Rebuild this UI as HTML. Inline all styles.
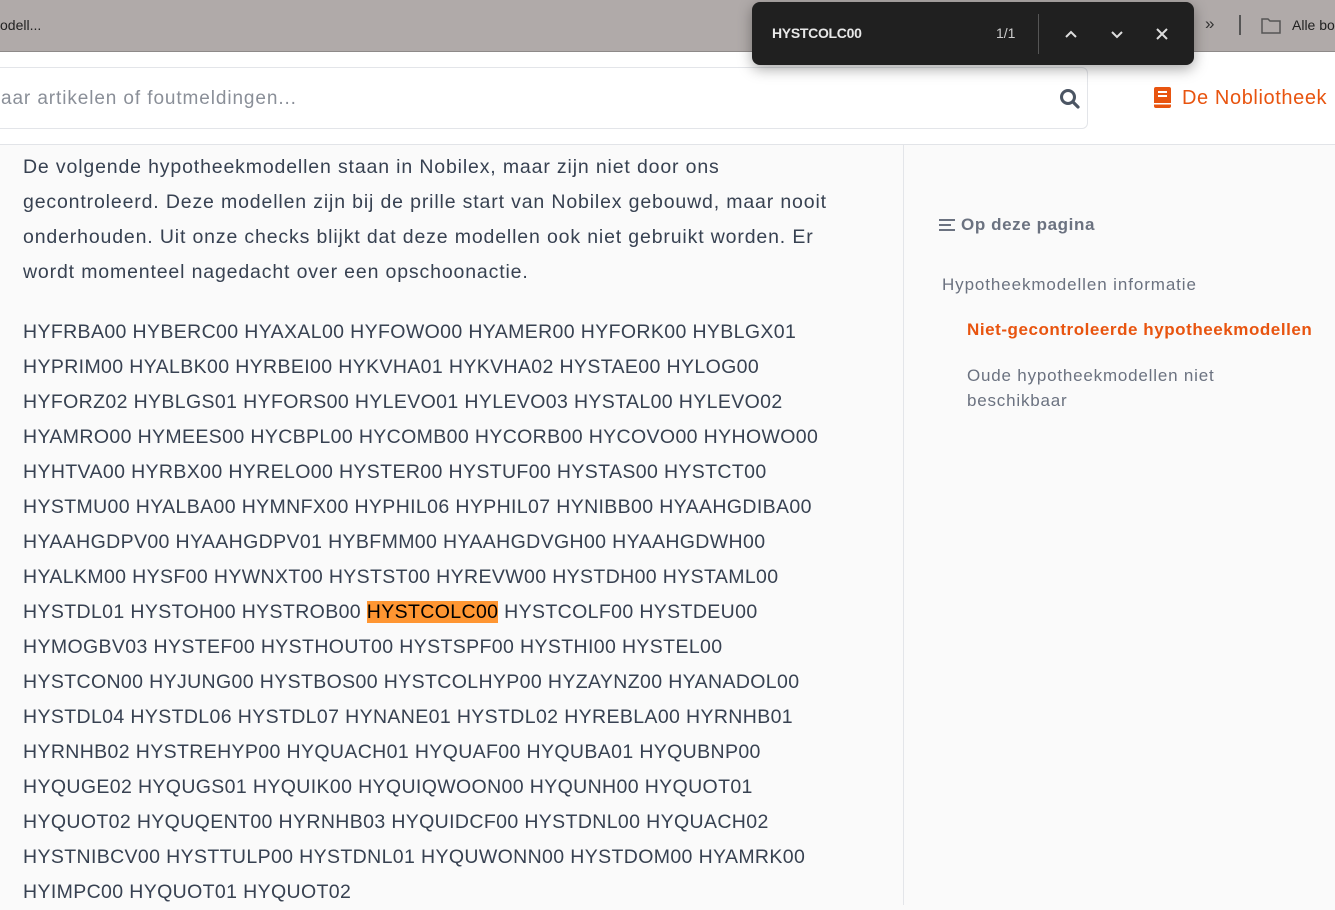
<!DOCTYPE html>
<html><head><meta charset="utf-8"><style>
*{margin:0;padding:0;box-sizing:border-box}
body{width:1335px;height:905px;overflow:hidden;background:#fafafa;font-family:"Liberation Sans",sans-serif;position:relative}
.tb{position:absolute;left:0;top:0;width:1335px;height:52px;background:#b0aaa9;border-bottom:1px solid #8e8a89}
.hdr{position:absolute;left:0;top:52px;width:1335px;height:93px;background:#fff;border-bottom:1px solid #e2e4e8}
.search{position:absolute;left:-10px;top:15px;width:1098px;height:62px;border:1px solid #e3e5e9;border-radius:6px;background:#fff}
.search span{position:absolute;left:10px;top:20px;font-size:19px;color:#8a8f98;letter-spacing:.9px}
.find{position:absolute;left:752px;top:2px;width:442px;height:63px;background:#202020;border-radius:8px;box-shadow:0 4px 14px rgba(0,0,0,.35);color:#e8e8e8}
.main{position:absolute;left:23px;top:150px;color:#374151;font-size:19.5px;line-height:35px;white-space:nowrap}
.main .p{letter-spacing:.85px}
.main .c{letter-spacing:.37px}
.side{position:absolute;left:903px;top:145px;width:1px;height:760px;background:#e3e5e9}
mark{background:#ff9632;color:#000}
</style></head><body>
<div class="tb">
<div style="position:absolute;left:0;top:17px;font-size:14px;color:#222">odell...</div>
<div style="position:absolute;left:1205px;top:14px;font-size:17px;color:#333">»</div>
<div style="position:absolute;left:1239px;top:15px;width:2px;height:20px;background:#555"></div>
<svg style="position:absolute;left:1261px;top:17px" width="20" height="17" viewBox="0 0 20 17"><path d="M1 2h6l2 2h10v12H1z" fill="none" stroke="#555" stroke-width="1.5"/></svg>
<div style="position:absolute;left:1292px;top:17px;font-size:14px;color:#222">Alle bo</div>
</div>
<div class="hdr">
<div class="search"><span>aar artikelen of foutmeldingen...</span>
<svg style="position:absolute;left:1068px;top:20px" width="22" height="22" viewBox="0 0 22 22"><circle cx="9" cy="9" r="6.5" fill="none" stroke="#4b5563" stroke-width="3"/><path d="M14 14l5 5" stroke="#4b5563" stroke-width="3.2" stroke-linecap="round"/></svg></div>
<svg style="position:absolute;left:1154px;top:35px" width="17" height="21" viewBox="0 0 17 21"><rect x="0" y="0" width="17" height="21" rx="2" fill="#e8540f"/><rect x="4" y="4" width="9" height="2" fill="#fff"/><rect x="4" y="8" width="9" height="2" fill="#fff"/><rect x="0" y="16" width="17" height="1.5" fill="#fff"/></svg>
<div style="position:absolute;left:1182px;top:35px;font-size:20px;color:#e8540f;letter-spacing:.6px">De Nobliotheek</div>
</div>
<div class="find">
<div style="position:absolute;left:20px;top:23px;font-size:14px;font-weight:bold;letter-spacing:-.3px">HYSTCOLC00</div>
<div style="position:absolute;left:244px;top:23px;font-size:14px;color:#ccc">1/1</div>
<div style="position:absolute;left:286px;top:12px;width:1px;height:40px;background:#555"></div>
<svg style="position:absolute;left:310px;top:24px" width="110" height="16" viewBox="0 0 110 16"><path d="M4 11l5-5 5 5M50 6l5 5 5-5" fill="none" stroke="#ddd" stroke-width="2"/><path d="M95 3l10 10M105 3L95 13" stroke="#ddd" stroke-width="2"/></svg>
</div>
<div class="main">
<div class="p">De volgende hypotheekmodellen staan in Nobilex, maar zijn niet door ons</div>
<div class="p">gecontroleerd. Deze modellen zijn bij de prille start van Nobilex gebouwd, maar nooit</div>
<div class="p">onderhouden. Uit onze checks blijkt dat deze modellen ook niet gebruikt worden. Er</div>
<div class="p">wordt momenteel nagedacht over een opschoonactie.</div>
<div class="c" style="margin-top:25px">HYFRBA00 HYBERC00 HYAXAL00 HYFOWO00 HYAMER00 HYFORK00 HYBLGX01</div>
<div class="c">HYPRIM00 HYALBK00 HYRBEI00 HYKVHA01 HYKVHA02 HYSTAE00 HYLOG00</div>
<div class="c">HYFORZ02 HYBLGS01 HYFORS00 HYLEVO01 HYLEVO03 HYSTAL00 HYLEVO02</div>
<div class="c">HYAMRO00 HYMEES00 HYCBPL00 HYCOMB00 HYCORB00 HYCOVO00 HYHOWO00</div>
<div class="c">HYHTVA00 HYRBX00 HYRELO00 HYSTER00 HYSTUF00 HYSTAS00 HYSTCT00</div>
<div class="c">HYSTMU00 HYALBA00 HYMNFX00 HYPHIL06 HYPHIL07 HYNIBB00 HYAAHGDIBA00</div>
<div class="c">HYAAHGDPV00 HYAAHGDPV01 HYBFMM00 HYAAHGDVGH00 HYAAHGDWH00</div>
<div class="c">HYALKM00 HYSF00 HYWNXT00 HYSTST00 HYREVW00 HYSTDH00 HYSTAML00</div>
<div class="c">HYSTDL01 HYSTOH00 HYSTROB00 <mark>HYSTCOLC00</mark> HYSTCOLF00 HYSTDEU00</div>
<div class="c">HYMOGBV03 HYSTEF00 HYSTHOUT00 HYSTSPF00 HYSTHI00 HYSTEL00</div>
<div class="c">HYSTCON00 HYJUNG00 HYSTBOS00 HYSTCOLHYP00 HYZAYNZ00 HYANADOL00</div>
<div class="c">HYSTDL04 HYSTDL06 HYSTDL07 HYNANE01 HYSTDL02 HYREBLA00 HYRNHB01</div>
<div class="c">HYRNHB02 HYSTREHYP00 HYQUACH01 HYQUAF00 HYQUBA01 HYQUBNP00</div>
<div class="c">HYQUGE02 HYQUGS01 HYQUIK00 HYQUIQWOON00 HYQUNH00 HYQUOT01</div>
<div class="c">HYQUOT02 HYQUQENT00 HYRNHB03 HYQUIDCF00 HYSTDNL00 HYQUACH02</div>
<div class="c">HYSTNIBCV00 HYSTTULP00 HYSTDNL01 HYQUWONN00 HYSTDOM00 HYAMRK00</div>
<div class="c">HYIMPC00 HYQUOT01 HYQUOT02</div>
</div>
<div class="side"></div>
<svg style="position:absolute;left:938px;top:218px" width="18" height="14" viewBox="0 0 18 14"><path d="M1 2h16M1 7h12M1 12h16" stroke="#6b7280" stroke-width="2"/></svg>
<div style="position:absolute;left:961px;top:215px;font-size:17px;font-weight:bold;color:#6b7280;letter-spacing:.6px">Op deze pagina</div>
<div style="position:absolute;left:942px;top:275px;font-size:17px;color:#6b7280;letter-spacing:.9px">Hypotheekmodellen informatie</div>
<div style="position:absolute;left:967px;top:320px;font-size:17px;font-weight:bold;color:#e8540f;letter-spacing:.55px">Niet-gecontroleerde hypotheekmodellen</div>
<div style="position:absolute;left:967px;top:363px;font-size:17px;color:#6b7280;line-height:25px;letter-spacing:.8px">Oude hypotheekmodellen niet<br>beschikbaar</div>
</body></html>
